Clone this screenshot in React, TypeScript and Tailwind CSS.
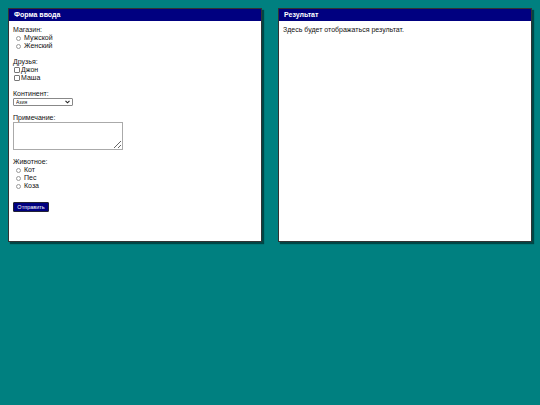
import { useState } from "react"

const font = "font-['Liberation_Sans',Arial,sans-serif]"

function Panel({ title, children }: { title: string; children: React.ReactNode }) {
  return (
    <div className="w-[254px] h-[234px] bg-white border border-[#333] shadow-[2px_2px_1px_rgba(0,0,0,0.45)] flex flex-col">
      <div className="h-[12px] bg-[#000080] text-white font-bold text-[7px] px-[5px] flex items-center">
        {title}
      </div>
      <div className="px-[4px] pt-[5px] text-[7px] leading-[8px] text-[#111]">{children}</div>
    </div>
  )
}

function Radio({ name, label, checked, onChange }: { name: string; label: string; checked: boolean; onChange: () => void }) {
  return (
    <label className="flex items-center h-[8px] pl-[3px]">
      <input
        type="radio"
        name={name}
        checked={checked}
        onChange={onChange}
        className="appearance-none w-[5px] h-[5px] m-0 mr-[3px] rounded-full border border-[#9a9a9a] bg-white checked:bg-[#000080]"
      />
      {label}
    </label>
  )
}

function Check({ label, checked, onChange }: { label: string; checked: boolean; onChange: () => void }) {
  return (
    <label className="flex items-center h-[8px] pl-[1px]">
      <input
        type="checkbox"
        checked={checked}
        onChange={onChange}
        className="appearance-none w-[6px] h-[6px] m-0 mr-[1px] border border-[#777] bg-white rounded-[1px] checked:bg-[#000080]"
      />
      {label}
    </label>
  )
}

export default function App() {
  const [gender, setGender] = useState("")
  const [friends, setFriends] = useState<string[]>([])
  const [animal, setAnimal] = useState("")

  const toggleFriend = (f: string) =>
    setFriends(friends.includes(f) ? friends.filter(x => x !== f) : [...friends, f])

  return (
    <div className={`min-h-[405px] bg-[#008080] p-2 flex gap-4 items-start ${font}`}>
      <Panel title="Форма ввода">
        <div>Магазин:</div>
        <Radio name="g" label="Мужской" checked={gender === "m"} onChange={() => setGender("m")} />
        <Radio name="g" label="Женский" checked={gender === "f"} onChange={() => setGender("f")} />

        <div className="mt-[8px]">Друзья:</div>
        <Check label="Джон" checked={friends.includes("john")} onChange={() => toggleFriend("john")} />
        <Check label="Маша" checked={friends.includes("masha")} onChange={() => toggleFriend("masha")} />

        <div className="mt-[8px]">Континент:</div>
        <div className="relative w-[60px] h-[8px]">
          <select className="appearance-none block w-full h-full text-[5px] leading-[6px] border border-[#888] rounded-[1px] p-0 pl-[2px] bg-white">
            <option>Азия</option>
            <option>Европа</option>
            <option>Африка</option>
          </select>
          <svg className="absolute right-[3px] top-[2px] w-[5px] h-[4px] pointer-events-none" viewBox="0 0 5 4">
            <path d="M0.5 0.8 L2.5 2.8 L4.5 0.8" fill="none" stroke="#222" strokeWidth="1.1" />
          </svg>
        </div>

        <div className="mt-[8px]">Примечание:</div>
        <textarea className="block w-[110px] h-[28px] border border-[#aaa] text-[7px]" />

        <div className="mt-[8px]">Животное:</div>
        <Radio name="a" label="Кот" checked={animal === "cat"} onChange={() => setAnimal("cat")} />
        <Radio name="a" label="Пес" checked={animal === "dog"} onChange={() => setAnimal("dog")} />
        <Radio name="a" label="Коза" checked={animal === "goat"} onChange={() => setAnimal("goat")} />

        <button className="mt-[12px] block w-[36px] h-[10px] bg-[#000080] text-white text-[5.5px] leading-[8px] border border-[#223] rounded-[1px]">
          Отправить
        </button>
      </Panel>
      <Panel title="Результат">
        <div>Здесь будет отображаться результат.</div>
      </Panel>
    </div>
  )
}
